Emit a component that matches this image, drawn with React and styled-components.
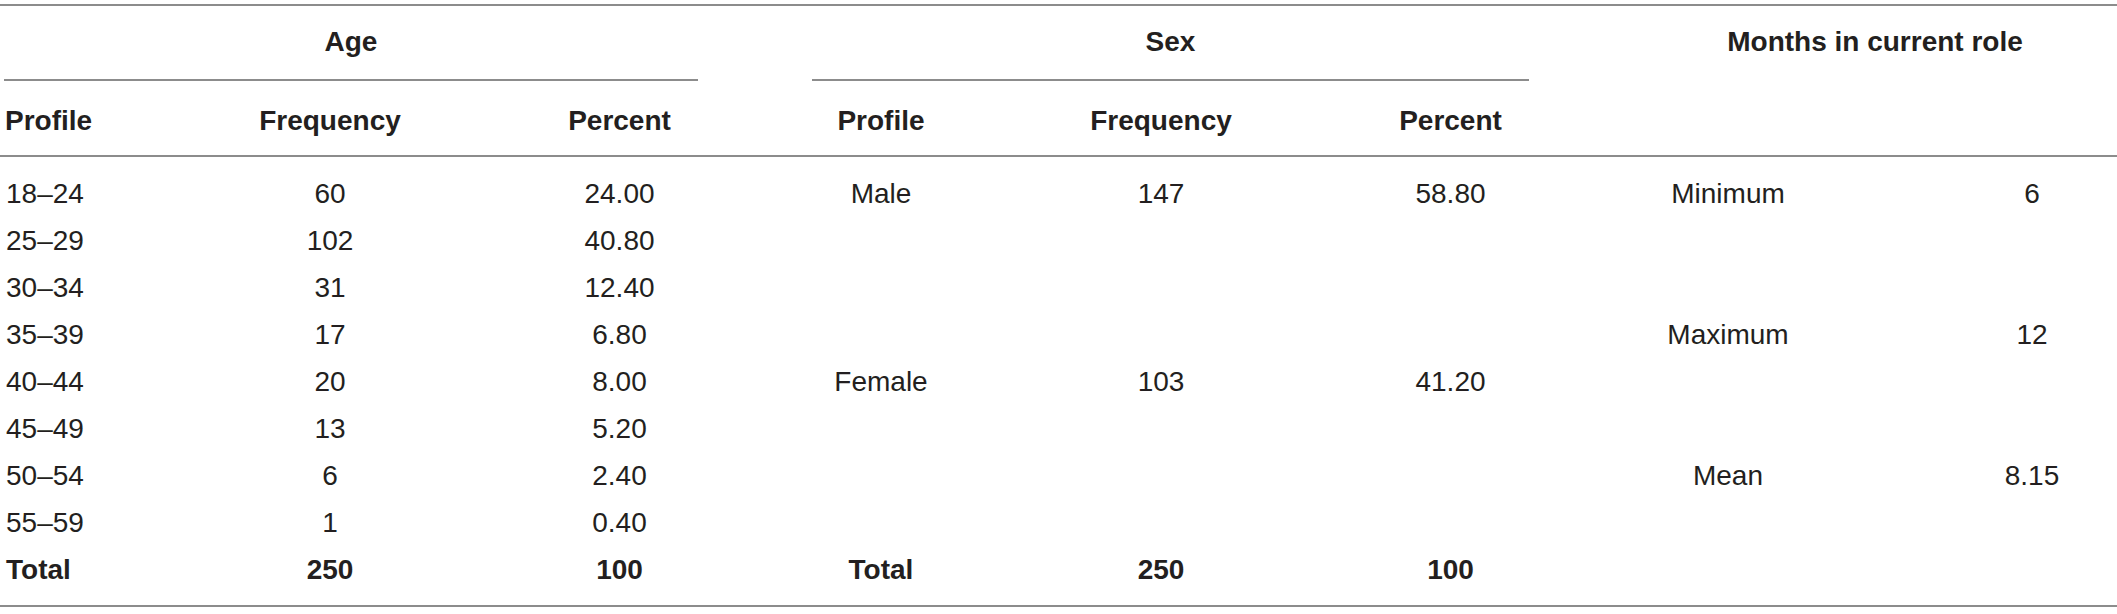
import React from 'react';
import styled, { createGlobalStyle } from 'styled-components';

const GlobalStyle = createGlobalStyle`
  html, body {
    margin: 0;
    padding: 0;
    background: #ffffff;
  }
  body {
    font-family: "Liberation Sans", Arial, sans-serif;
    color: #231f20;
    overflow: hidden;
  }
`

const cols = '119px 422px 157px 114px 138px 422px 157px 398px 190px'

const rows = [
  ['18–24', '60', '24.00', 'Male', '147', '58.80', 'Minimum', '6'],
  ['25–29', '102', '40.80', '', '', '', '', ''],
  ['30–34', '31', '12.40', '', '', '', '', ''],
  ['35–39', '17', '6.80', '', '', '', 'Maximum', '12'],
  ['40–44', '20', '8.00', 'Female', '103', '41.20', '', ''],
  ['45–49', '13', '5.20', '', '', '', '', ''],
  ['50–54', '6', '2.40', '', '', '', 'Mean', '8.15'],
  ['55–59', '1', '0.40', '', '', '', '', ''],
]

const totals = ['Total', '250', '100', 'Total', '250', '100', '', '']

export default function App() {
  return (
    <Page>
      <GlobalStyle />
      <Table>
        <GroupRow>
          <GroupCell span="1 / 4" lineLeft={4} underline>Age</GroupCell>
          <GroupCell span="5 / 8" underline>Sex</GroupCell>
          <GroupCell span="8 / 10" shift={104}>Months in current role</GroupCell>
        </GroupRow>
        <HeadRow>
          <HeadCell align="left">Profile</HeadCell>
          <HeadCell>Frequency</HeadCell>
          <HeadCell>Percent</HeadCell>
          <HeadCell />
          <HeadCell>Profile</HeadCell>
          <HeadCell>Frequency</HeadCell>
          <HeadCell>Percent</HeadCell>
          <HeadCell />
          <HeadCell />
        </HeadRow>
        <Body>
          {rows.map((r, i) => (
            <React.Fragment key={i}>
              <Cell align="left">{r[0]}</Cell>
              <Cell>{r[1]}</Cell>
              <Cell>{r[2]}</Cell>
              <Cell />
              <Cell>{r[3]}</Cell>
              <Cell>{r[4]}</Cell>
              <Cell>{r[5]}</Cell>
              <Cell>{r[6]}</Cell>
              <Cell shift={20}>{r[7]}</Cell>
            </React.Fragment>
          ))}
          <Cell align="left" bold>{totals[0]}</Cell>
          <Cell bold>{totals[1]}</Cell>
          <Cell bold>{totals[2]}</Cell>
          <Cell />
          <Cell bold>{totals[3]}</Cell>
          <Cell bold>{totals[4]}</Cell>
          <Cell bold>{totals[5]}</Cell>
          <Cell />
          <Cell />
        </Body>
      </Table>
    </Page>
  );
}

const Page = styled.div`
  width: 2117px;
  padding-top: 4px;
`
const Table = styled.div`
  width: 100%;
  border-top: 2px solid #8c8c8c;
  border-bottom: 2px solid #8c8c8c;
`
const GroupRow = styled.div`
  display: grid;
  grid-template-columns: ${cols};
`
const GroupCell = styled.div`
  grid-column: ${p => p.span};
  margin-left: ${p => p.lineLeft || 0}px;
  padding-left: ${p => p.shift || 0}px;
  height: 73px;
  line-height: 72px;
  padding-bottom: 0;
  font-size: 28px;
  font-weight: 700;
  text-align: center;
  border-bottom: 2px solid ${p => (p.underline ? '#8c8c8c' : 'transparent')};
`
const HeadRow = styled.div`
  display: grid;
  grid-template-columns: ${cols};
  border-bottom: 2px solid #8c8c8c;
`
const HeadCell = styled.div`
  padding-top: 6px;
  padding-left: ${p => (p.align === 'left' ? 5 : 0)}px;
  line-height: 68px;
  height: 68px;
  font-size: 28px;
  font-weight: 700;
  text-align: ${p => p.align || 'center'};
  white-space: nowrap;
`
const Body = styled.div`
  display: grid;
  grid-template-columns: ${cols};
  grid-auto-rows: 47px;
  padding: 13px 0 12px;
`
const Cell = styled.div`
  padding-left: ${p => (p.align === 'left' ? 6 : p.shift || 0)}px;
  line-height: 47px;
  font-size: 28px;
  font-weight: ${p => (p.bold ? 700 : 400)};
  text-align: ${p => p.align || 'center'};
  white-space: nowrap;
`
